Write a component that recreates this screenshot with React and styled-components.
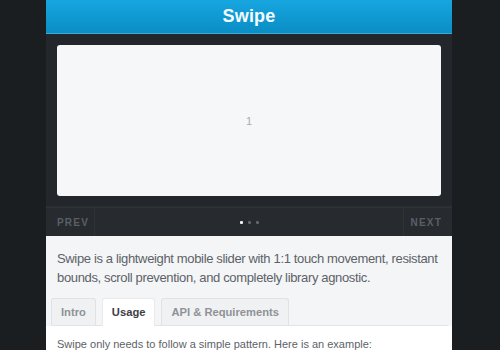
import React from "react";
import styled, { createGlobalStyle } from "styled-components";

const GlobalStyle = createGlobalStyle`
  html, body {
    margin: 0;
    padding: 0;
    background: #1b1e21;
    font-family: "Liberation Sans", Arial, sans-serif;
  }
`;

const tabs = ["Intro", "Usage", "API & Requirements"];

class App extends React.Component {
  render() {
    return (
      <Page>
        <GlobalStyle />
        <Wrap>
          <Header>Swipe</Header>
          <Stage>
            <Slide>1</Slide>
          </Stage>
          <Nav>
            <NavButton side="left">PREV</NavButton>
            <Dots>
              {[0, 1, 2].map(i => (
                <Dot key={i} active={i === 0} />
              ))}
            </Dots>
            <NavButton side="right">NEXT</NavButton>
          </Nav>
          <Content>
            <Lead>
              Swipe is a lightweight mobile slider with 1:1 touch movement,
              resistant bounds, scroll prevention, and completely library
              agnostic.
            </Lead>
            <TabBar>
              {tabs.map(t => (
                <Tab key={t} active={t === "Usage"}>
                  {t}
                </Tab>
              ))}
            </TabBar>
            <Panel>Swipe only needs to follow a simple pattern. Here is an example:</Panel>
          </Content>
        </Wrap>
      </Page>
    );
  }
}

const Page = styled.div`
  display: flex;
  justify-content: center;
  padding-right: 2px;
  height: 350px;
  overflow: hidden;
`;

const Wrap = styled.div`
  width: 406px;
  background: #23262a;
  display: flex;
  flex-direction: column;
  & > * {
    flex-shrink: 0;
  }
`;

const Header = styled.div`
  height: 33px;
  border-bottom: 1px solid #3aa9d6;
  background: linear-gradient(#17a6e0, #0a8dc4);
  color: #f4fbff;
  font-size: 18px;
  font-weight: bold;
  display: flex;
  align-items: center;
  justify-content: center;
  letter-spacing: 0.2px;
`;

const Stage = styled.div`
  padding: 11px 11px 10px;
  border-bottom: 1px solid #2b2e33;
`;

const Slide = styled.div`
  height: 151px;
  background: #f6f7f9;
  border-radius: 3px;
  display: flex;
  align-items: center;
  justify-content: center;
  color: #a8abaf;
  font-size: 11px;
`;

const Nav = styled.div`
  height: 28px;
  background: #272a2f;
  border-top: 1px solid #2e3237;
  display: flex;
  align-items: stretch;
`;

const NavButton = styled.div`
  width: 49px;
  display: flex;
  align-items: center;
  justify-content: ${p => (p.side === "left" ? "flex-start" : "flex-end")};
  box-sizing: border-box;
  ${p => (p.side === "left" ? "border-right" : "border-left")}: 1px solid #2f3338;
  color: #5a5f66;
  font-size: 10px;
  font-weight: bold;
  letter-spacing: 1.2px;
  padding-left: ${p => (p.side === "left" ? "11px" : "0")};
  padding-right: ${p => (p.side === "right" ? "10px" : "0")};
`;

const Dots = styled.div`
  flex: 1;
  display: flex;
  align-items: center;
  justify-content: center;
  gap: 5px;
  padding-left: 1px;
`;

const Dot = styled.span`
  width: 3px;
  height: 3px;
  border-radius: 1px;
  background: ${p => (p.active ? "#f2f2f2" : "#62666c")};
`;

const Content = styled.div`
  flex: 1;
  background: #f4f5f6;
  padding: 13px 4px 0 5px;
`;

const Lead = styled.p`
  margin: 0 0 11px 6px;
  color: #5d6268;
  font-size: 13px;
  letter-spacing: -0.35px;
  line-height: 19px;
`;

const TabBar = styled.div`
  display: flex;
  gap: 6px;
  border-bottom: 1px solid #e2e4e6;
`;

const Tab = styled.div`
  height: 26px;
  padding: 0 9px;
  display: flex;
  align-items: center;
  font-size: 11.2px;
  font-weight: bold;
  color: ${p => (p.active ? "#3c4044" : "#8e9297")};
  background: ${p => (p.active ? "#ffffff" : "#f0f1f2")};
  border: 1px solid ${p => (p.active ? "#e8eaec" : "#e0e2e4")};
  border-bottom: none;
  border-radius: 3px 3px 0 0;
  margin-bottom: ${p => (p.active ? "-1px" : "0")};
  padding-bottom: ${p => (p.active ? "1px" : "0")};
`;

const Panel = styled.div`
  background: #ffffff;
  margin: 0 -4px 0 -5px;
  padding: 12px 11px;
  color: #5d6268;
  font-size: 11px;
`;

export default App;
